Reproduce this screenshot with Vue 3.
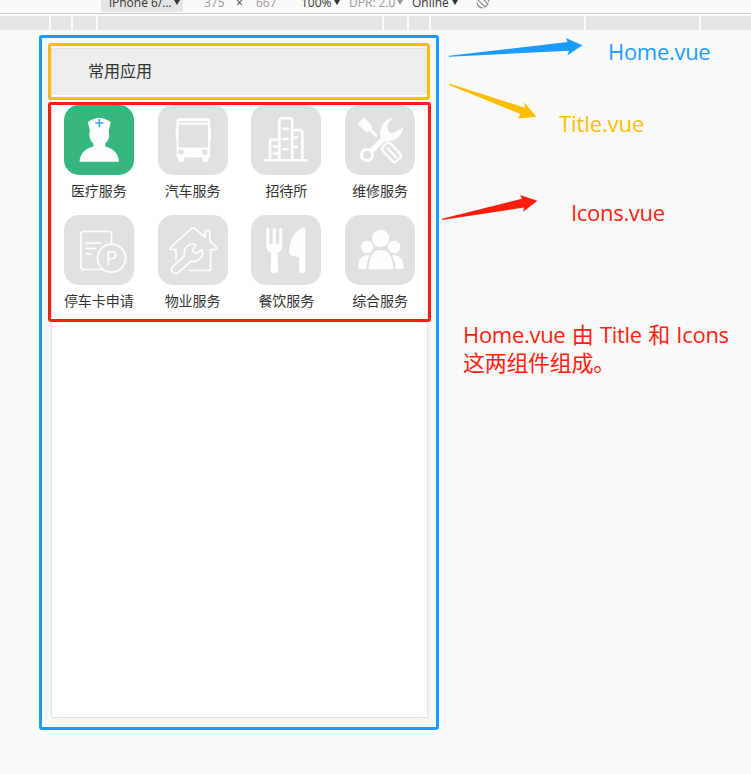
<script setup>
const segments = [49, 20, 23, 284, 23, 20, 153, 113, 50]

const services = [
  { name: '医疗服务', icon: 'nurse', active: true },
  { name: '汽车服务', icon: 'bus' },
  { name: '招待所', icon: 'building' },
  { name: '维修服务', icon: 'tools' },
  { name: '停车卡申请', icon: 'parking' },
  { name: '物业服务', icon: 'house' },
  { name: '餐饮服务', icon: 'food' },
  { name: '综合服务', icon: 'people' },
]
</script>

<template>
  <div class="page">
    <header class="toolbar">
      <div class="device"><span class="device-name">iPhone 6/…</span><i class="caret"></i></div>
      <span class="dim width">375</span>
      <span class="times">×</span>
      <span class="dim height">667</span>
      <span class="zoom">100%</span><i class="caret"></i>
      <span class="dim dpr">DPR: 2.0</span><i class="caret pale"></i>
      <span class="online">Online</span><i class="caret"></i>
      <svg class="rotate" viewBox="0 0 14 14" width="14" height="14">
        <path d="M2 4 5 1 12 8 9 11ZM1 6a6 6 0 0 0 6 6M13 6A6 6 0 0 0 8 1" />
      </svg>
    </header>
    <div class="ruler">
      <span v-for="(w, i) in segments" :key="i" :style="{ width: w + 'px' }"></span>
    </div>

    <main class="phone">
      <h1 class="title">常用应用</h1>
      <div class="icons">
        <div v-for="s in services" :key="s.name" class="item">
          <div class="tile" :class="{ active: s.active }">
            <svg v-if="s.icon === 'nurse'" class="solid" viewBox="0 0 70 70">
              <path d="M25.8 25.5 23.8 17Q35 8.8 46.8 17L44.8 25.5Q46.5 34 41.3 38.5V41.5Q54.5 45 54.8 56.8H15.5Q16 45 29.3 41.5V38.5Q24 34 25.8 25.5Z" />
              <path class="cross" d="M35.3 14v8M31.3 18H39.3" />
            </svg>
            <svg v-else-if="s.icon === 'bus'" class="solid" viewBox="0 0 70 70">
              <path fill-rule="evenodd" d="M20.5 13.2H50.3Q52.2 13.2 52.2 15V24H53V34H52.2V51Q52.2 52.5 50.5 52.5V55Q50.5 56.8 48.8 56.8H46Q44.3 56.8 44.3 55V52.5H26.3V55Q26.3 56.8 24.6 56.8H21.8Q20 56.8 20 55V52.5Q18.5 52.5 18.5 51V34H17.7V24H18.5V15Q18.5 13.2 20.5 13.2ZM20.5 19.8V42.4H50V19.8ZM20.8 16.2V17.8H49.8V16.2ZM20.2 47a2.8 2.8 0 1 0 5.6 0a2.8 2.8 0 1 0-5.6 0ZM44 47a2.8 2.8 0 1 0 5.6 0a2.8 2.8 0 1 0-5.6 0Z" />
            </svg>
            <svg v-else-if="s.icon === 'building'" class="line thick" viewBox="0 0 70 70">
              <path d="M14.3 55.3H55.5M19 55V37Q19 34.6 21.5 34.6H28M28.3 55V16Q28.3 13.3 31 13.3H38.5Q41.2 13.3 41.2 16V55M41.2 25H48.5Q51.3 25 51.3 28V55M32.5 23.7H36.8M32.5 34H36.8M32.5 44.3H36.8M23 41.5H27M23 48.5H27M42 32.5H46M42 42H46" />
            </svg>
            <svg v-else-if="s.icon === 'tools'" class="line" viewBox="0 0 70 70">
              <path class="filled" d="M13 18.7 18.8 12.7 26.5 20.4V23.2L23.2 26.5H20.7Z" />
              <path class="shaft" d="M25 24.5 31.2 30.5" />
              <circle class="ring" cx="22" cy="50" r="5.6" />
              <path class="filled" d="M25 44 36 33Q34 24.5 39 18Q42.5 13.6 47.2 13.2Q40.5 20 42.5 25Q45 30 50.5 27.2L57.8 23Q55 34.5 46.5 35.2Q42.5 35.8 39.8 36L28.5 47Z" />
              <g transform="rotate(-43 46.2 47)">
                <rect class="handle" x="40.9" y="37.7" width="10.6" height="19.6" rx="2.8" />
                <path class="handle" d="M46.2 41.5V53.7" />
              </g>
            </svg>
            <svg v-else-if="s.icon === 'parking'" class="line" viewBox="0 0 70 70">
              <path d="M47.5 29V19Q47.5 16.5 45 16.5H19.5Q17 16.5 17 19V52Q17 54.5 19.5 54.5H38.5M22 28.2H36.5M22 33.5H31.5M22 38.8H27" />
              <circle cx="47.5" cy="43.2" r="14" />
              <text x="41.4" y="50.2">P</text>
            </svg>
            <svg v-else-if="s.icon === 'house'" class="line" viewBox="0 0 70 70">
              <path d="M18 44V34.5H13Q11.3 34 12.5 32.3L33.8 13.3Q35.2 12.2 36.6 13.3L47 22V17Q47 15.6 48.3 15.6H50.5Q51.8 15.6 51.8 17V26L58.3 32.2Q59.5 34 57.8 34.5H52.7V53.5Q52.7 55.5 50.7 55.5H31.5" />
              <path d="M14.5 52 26.5 41Q25 33.5 31 30Q34.5 28 37.8 30L35 34.5Q34.8 38 38.5 38.3L44 34.5Q45.8 40 41.8 43.8Q37.8 47 32.8 46.3L21 57Q17.5 60 14.5 57Q12 54.5 14.5 52Z" />
            </svg>
            <svg v-else-if="s.icon === 'food'" class="solid" viewBox="0 0 70 70">
              <path d="M15.2 14.3Q16.7 11.3 18.3 14.3V29H21.7V14.3Q23.2 11.3 24.8 14.3V29H28.2V14.3Q29.7 11.3 31.2 14.3V31Q31.2 36 26.6 38L27.2 55Q27.2 58.2 23.3 58.2Q19.7 58.2 19.7 55L20.2 38Q15.2 36 15.2 31ZM54.3 14V55Q54.3 58.2 51.2 58.2Q48.2 58.2 48.2 55V42.7L40.2 40.2Q38.2 39.4 38.2 37.2C38.2 26 43 16.5 51.5 13Q54 12.2 54.3 14Z" />
            </svg>
            <svg v-else class="solid" viewBox="0 0 70 70">
              <circle cx="35.7" cy="23.3" r="8.6" />
              <circle cx="22.1" cy="32" r="6.2" />
              <circle cx="49.1" cy="32" r="6.2" />
              <path d="M24.8 54.3Q23.2 54.3 23.5 52C24.7 41 28 35 35.8 35S47 41 48.3 52Q48.6 54.3 47 54.3ZM24.8 40.4Q22 44.8 21.2 54H14.8Q13 54 13.2 51.6C13.8 44.5 16.5 39 24.8 40.4ZM47 40.4Q49.8 44.8 50.6 54H57Q58.8 54 58.6 51.6C58 44.5 55.3 39 47 40.4Z" />
            </svg>
          </div>
          <span class="label">{{ s.name }}</span>
        </div>
      </div>
    </main>

    <div class="frame home"></div>
    <div class="frame heading"></div>
    <div class="frame grid"></div>
    <svg class="arrows" viewBox="0 0 751 774">
      <path fill="#1c9bff" d="M449 55.7 567.5 42 565.8 38 582.4 45.3 567.3 55.4 569 50.7 449 56.8Z" />
      <path fill="#ffbd00" d="M449 83.6 525 107.7 524 102.3 536.5 116.8 518 118.6 520.5 114 449 85Z" />
      <path fill="#ff1d0e" d="M442 218.8 522 198.8 520 195 537.4 200.8 523.2 211.8 524 207.5 442 220Z" />
    </svg>
    <p class="note home-note">Home.vue</p>
    <p class="note title-note">Title.vue</p>
    <p class="note icons-note">Icons.vue</p>
    <p class="note summary">Home.vue 由 Title 和 Icons<br />这两组件组成。</p>
  </div>
</template>

<style>
body {
  margin: 0;
  background: #fafafa;
}
</style>

<style scoped>
.page {
  position: relative;
  width: 751px;
  height: 774px;
  overflow: hidden;
  background: #fafafa;
  font-family: "Open Sans", "Noto Sans CJK SC", sans-serif;
  color: #333;
}
.toolbar {
  display: flex;
  height: 13px;
  border-bottom: 1px solid #c9c9c9;
  padding-left: 101px;
  font-size: 12px;
  line-height: 16px;
  white-space: nowrap;
}
.toolbar > span,
.device-name {
  margin-top: -5px;
  height: 16px;
  flex: none;
}
.device {
  display: flex;
  width: 82px;
  height: 12px;
  flex: none;
  background: #e5e5e5;
  border-radius: 0 0 2px 2px;
}
.device-name {
  width: 65px;
  padding-left: 8px;
}
.caret {
  width: 0;
  height: 0;
  flex: none;
  border: 3px solid transparent;
  border-top: 5px solid #333;
  border-bottom: 0;
}
.caret.pale {
  border-top-color: #999;
}
.dim {
  color: #999;
}
.width {
  padding-left: 21px;
  width: 32px;
}
.times {
  width: 20px;
}
.height {
  width: 45px;
}
.zoom {
  width: 33px;
}
.dpr {
  margin-left: 9px;
  width: 48px;
}
.online {
  margin-left: 9px;
  width: 37px;
  padding-right: 3px;
}
.rotate {
  margin: -4px 0 0 18px;
  flex: none;
  fill: none;
  stroke: #888;
  stroke-width: 1.1;
}
.ruler {
  display: flex;
  gap: 2px;
  padding-top: 2px;
  height: 14px;
}
.ruler span {
  flex: none;
  background: #e5e5e5;
}
.phone {
  box-sizing: border-box;
  width: 377px;
  height: 670px;
  margin: 18px 0 0 51px;
  border: 1px solid #e2e2e2;
  background: #fff;
  box-shadow: 0 0 10px rgba(0, 0, 0, 0.06);
}
.title {
  margin: 0;
  height: 46px;
  padding-left: 36px;
  background: #ededed;
  font-size: 16px;
  font-weight: 400;
  line-height: 45px;
}
.icons {
  display: grid;
  grid-template-columns: repeat(4, 1fr);
  grid-auto-rows: 110px;
  padding-top: 10px;
}
.item {
  display: flex;
  flex-direction: column;
  align-items: center;
}
.tile {
  width: 70px;
  height: 70px;
  flex: none;
  border-radius: 15px;
  background: #e0e0e0;
}
.tile.active {
  background: #35b77f;
}
.tile svg {
  display: block;
  width: 70px;
  height: 70px;
}
.solid {
  fill: #fdfefe;
}
.cross {
  fill: none;
  stroke: #3ba5f3;
  stroke-width: 1.7;
}
.line {
  fill: none;
  stroke: #fdfdfd;
  stroke-width: 1.7;
  stroke-linecap: round;
  stroke-linejoin: round;
}
.thick {
  stroke-width: 2.6;
}
.line .filled {
  fill: #fdfdfd;
  stroke-width: 0.6;
}
.shaft {
  stroke-width: 2.8;
}
.ring {
  stroke-width: 3;
}
.handle {
  stroke-width: 2.4;
}
.line text {
  fill: #fdfdfd;
  stroke: none;
  font: 20px "Open Sans", sans-serif;
}
.label {
  margin-top: 6px;
  font-size: 14px;
  line-height: 20px;
  white-space: nowrap;
}
.frame {
  position: absolute;
  box-sizing: border-box;
  border: 3px solid;
  border-radius: 3px;
}
.frame.home {
  left: 39px;
  top: 35px;
  width: 400px;
  height: 695px;
  border-color: #1c9bff;
}
.frame.heading {
  left: 48px;
  top: 43px;
  width: 382px;
  height: 57px;
  border-color: #ffbd00;
}
.frame.grid {
  left: 48px;
  top: 102px;
  width: 383px;
  height: 220px;
  border-color: #ff1d0e;
}
.arrows {
  position: absolute;
  left: 0;
  top: 0;
  width: 751px;
  height: 774px;
}
.note {
  position: absolute;
  margin: 0;
  font-size: 22px;
  line-height: 28px;
  letter-spacing: -0.3px;
  white-space: nowrap;
}
.home-note {
  left: 608px;
  top: 37px;
  color: #1c9bff;
}
.title-note {
  left: 559px;
  top: 109px;
  letter-spacing: -0.1px;
  color: #ffbd00;
}
.icons-note {
  left: 571px;
  top: 198px;
  color: #ff1d0e;
}
.summary {
  left: 463px;
  top: 320px;
  word-spacing: 1px;
  color: #ff1d0e;
}
</style>
